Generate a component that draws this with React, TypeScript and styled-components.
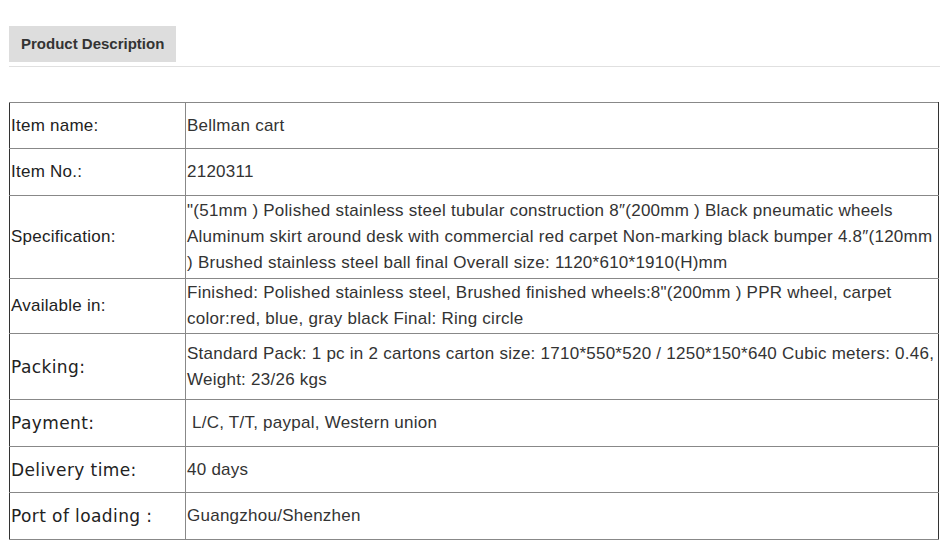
import styled, { createGlobalStyle } from 'styled-components'

const GlobalStyle = createGlobalStyle`
  body {
    margin: 0;
    background: #ffffff;
    font-family: "Liberation Sans", Arial, sans-serif;
    color: #333333;
  }
`

const rows = [
  { label: 'Item name:', value: 'Bellman cart', height: 46 },
  { label: 'Item No.:', value: '2120311', height: 47 },
  {
    label: 'Specification:',
    value:
      '"(51mm ) Polished stainless steel tubular construction 8″(200mm ) Black pneumatic wheels Aluminum skirt around desk with commercial red carpet Non-marking black bumper 4.8″(120mm ) Brushed stainless steel ball final Overall size: 1120*610*1910(H)mm',
    height: 83,
  },
  {
    label: 'Available in:',
    value:
      'Finished: Polished stainless steel, Brushed finished wheels:8"(200mm ) PPR wheel, carpet color:red, blue, gray black Final: Ring circle',
    height: 55,
  },
  {
    label: 'Packing:',
    value:
      'Standard Pack: 1 pc in 2 cartons carton size: 1710*550*520 / 1250*150*640 Cubic meters: 0.46, Weight: 23/26 kgs',
    height: 66,
    wide: true,
  },
  { label: 'Payment:', value: '\u00a0L/C, T/T, paypal, Western union', height: 47, wide: true },
  { label: 'Delivery time:', value: '40 days', height: 46, wide: true },
  { label: 'Port of loading :', value: 'Guangzhou/Shenzhen', height: 47, wide: true },
]

function App() {
  return (
    <>
      <GlobalStyle />
      <Page>
        <TabBar>
          <Tab>Product Description</Tab>
        </TabBar>
        <SpecTable>
          <colgroup>
            <col style={{ width: 176 }} />
            <col />
          </colgroup>
          <tbody>
            {rows.map((row) => (
              <tr key={row.label} style={{ height: row.height }}>
                <LabelCell wide={row.wide}>{row.label}</LabelCell>
                <ValueCell>{row.value}</ValueCell>
              </tr>
            ))}
          </tbody>
        </SpecTable>
      </Page>
    </>
  )
}

const Page = styled.div`
  padding: 26px 0 0 9px;
  width: 931px;
`

const TabBar = styled.div`
  border-bottom: 1px solid #e0e0e0;
  padding-bottom: 4px;
  margin-bottom: 35px;
`

const Tab = styled.div`
  display: inline-block;
  height: 36px;
  line-height: 36px;
  padding: 0 12px;
  width: 143px;
  background: #dddddd;
  font-size: 15px;
  font-weight: bold;
  color: #333333;
  white-space: nowrap;
`

const SpecTable = styled.table`
  width: 930px;
  border-collapse: collapse;
  table-layout: fixed;
  border: 1px solid #333333;
  font-size: 17px;
  letter-spacing: 0.25px;
  color: #333333;
`

const LabelCell = styled.td<{ wide?: boolean }>`
  padding: 0 0 0 1px;
  border: 1px solid #888888;
  border-left-color: #333333;
  vertical-align: middle;
  font-family: ${({ wide }) => (wide ? '"DejaVu Sans", Verdana, sans-serif' : '"Liberation Sans", Arial, sans-serif')};
  font-size: ${({ wide }) => (wide ? '17px' : '17px')};
  letter-spacing: ${({ wide }) => (wide ? '0.4px' : '0.25px')};
  color: #222222;
`

const ValueCell = styled.td`
  padding: 0 0 0 1px;
  border: 1px solid #888888;
  border-right-color: #333333;
  vertical-align: middle;
  line-height: 26px;
`

export default App
